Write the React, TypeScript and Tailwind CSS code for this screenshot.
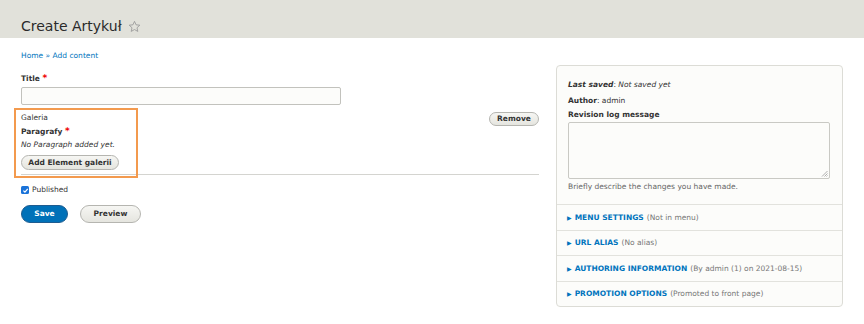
import React from 'react'

const details = [
  { title: 'Menu settings', note: '(Not in menu)' },
  { title: 'URL alias', note: '(No alias)' },
  { title: 'Authoring information', note: '(By admin (1) on 2021-08-15)' },
  { title: 'Promotion options', note: '(Promoted to front page)' },
]

const btn =
  'rounded-full border border-[#b5b5b0] bg-gradient-to-b from-[#f6f6f3] to-[#e5e5df] font-bold text-[#333] leading-none'

export default function App() {
  return (
    <div className="w-[864px] h-[324px] bg-white text-[#333] text-[7.5px] overflow-hidden relative" style={{ fontFamily: '"DejaVu Sans", sans-serif' }}>
      {/* header */}
      <div className="h-[38px] bg-[#e1e1da] flex items-end pl-[21px] pb-[5px]">
        <h1 className="text-[14px] leading-none font-normal text-[#2a2a2a] flex items-center gap-[6px]">
          Create Artykuł
          <svg width="13" height="13" viewBox="0 0 24 24" fill="none" stroke="#999" strokeWidth="1.6" strokeLinejoin="round">
            <polygon points="12,2.5 14.9,8.9 21.8,9.6 16.6,14.3 18.1,21.1 12,17.6 5.9,21.1 7.4,14.3 2.2,9.6 9.1,8.9" />
          </svg>
        </h1>
      </div>

      <div className="flex pl-[21px] gap-[17px]">
        {/* main column */}
        <div className="w-[518px]">
          <div className="mt-[13px] leading-[10px] text-[#0074bd]">Home » Add content</div>

          <div className="mt-[12px] leading-[10px] font-bold">
            Title <span className="text-[#e00] text-[9px]">*</span>
          </div>
          <div className="mt-[3px] w-[320px] h-[18px] border border-[#c2c2bd] rounded-[2px] bg-[#fcfcfa]" />

          <div className="flex justify-between">
            <div>
              <div className="mt-[8px] leading-[10px]">Galeria</div>
              <div className="mt-[3px] leading-[10px] font-bold">
                Paragrafy <span className="text-[#e00] text-[9px]">*</span>
              </div>
              <div className="mt-[3px] leading-[10px] italic">No Paragraph added yet.</div>
              <button className={`${btn} mt-[5px] h-[15px] w-[98px]`}>Add Element galerii</button>
            </div>
            <button className={`${btn} mt-[7px] h-[14px] w-[50px]`}>Remove</button>
          </div>

          <div className="mt-[4px] border-t border-[#d4d4d0]" />

          <div className="mt-[10px] leading-[10px] flex items-center gap-[3px]">
            <span className="w-[8px] h-[8px] rounded-[1.5px] bg-[#1a73d9] flex items-center justify-center">
              <svg width="7" height="7" viewBox="0 0 10 10" fill="none" stroke="white" strokeWidth="1.8">
                <path d="M2 5.2 L4.2 7.3 L8.2 2.7" />
              </svg>
            </span>
            Published
          </div>

          <div className="mt-[10px] flex gap-[12px]">
            <button className="h-[18px] w-[47px] rounded-full bg-[#0071b8] border border-[#1e5c90] text-white font-bold leading-none">Save</button>
            <button className={`${btn} h-[18px] w-[61px]`}>Preview</button>
          </div>
        </div>

        {/* sidebar */}
        <div className="mt-[27px] w-[287px] border border-[#dcdcd6] rounded-[4px] bg-[#fcfcfa]">
          <div className="px-[11px] pt-[14px] pb-[12px]">
            <div className="leading-[10px]">
              <span className="italic font-bold">Last saved</span>: <span className="italic">Not saved yet</span>
            </div>
            <div className="mt-[6px] leading-[10px]">
              <span className="font-bold">Author</span>: admin
            </div>
            <div className="mt-[4px] leading-[10px] font-bold">Revision log message</div>
            <div className="mt-[2px] w-[262px] h-[57px] border border-[#c9c9c4] rounded-[2px] bg-[#fcfcfa] relative">
              <svg className="absolute right-[1px] bottom-[1px]" width="7" height="7" viewBox="0 0 7 7" stroke="#999" strokeWidth="0.8">
                <path d="M6.5 1 L1 6.5 M6.5 3.5 L3.5 6.5 M6.5 5.5 L5.5 6.5" />
              </svg>
            </div>
            <div className="mt-[3px] leading-[10px] text-[#666]">Briefly describe the changes you have made.</div>
          </div>
          {details.map((d) => (
            <div key={d.title} className="h-[25.5px] border-t border-[#e2e2dd] flex items-center px-[10px] gap-[3px]">
              <span className="text-[#0074bd] text-[6px]">▶</span>
              <span className="text-[#0074bd] font-bold uppercase">{d.title}</span>
              <span className="text-[#777]">{d.note}</span>
            </div>
          ))}
        </div>
      </div>

      {/* focus outline overlay */}
      <div className="absolute left-[14px] top-[108px] w-[124px] h-[70px] border-2 border-[#f39a4e] pointer-events-none" />
    </div>
  )
}
